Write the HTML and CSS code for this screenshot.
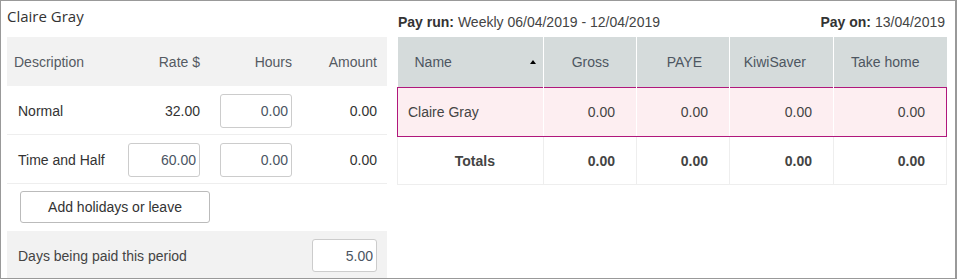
FILE: index.html
```html
<!doctype html>
<html>
	<head>
		<meta charset="utf-8">
		<title>Pay run - Claire Gray</title>
		<link rel="stylesheet" href="styles.css">
	</head>
	<body>
		<div class="frame">
			<div class="left">
				<h2 class="title">Claire Gray</h2>
				<div class="pay-lines">
					<div class="line head">
						<span>Description</span>
						<span class="num">Rate $</span>
						<span class="num">Hours</span>
						<span class="num">Amount</span>
					</div>
					<div class="line">
						<span class="desc">Normal</span>
						<span class="num">32.00</span>
						<input class="box" value="0.00">
						<span class="num">0.00</span>
					</div>
					<div class="line">
						<span class="desc">Time and Half</span>
						<input class="box" value="60.00">
						<input class="box" value="0.00">
						<span class="num">0.00</span>
					</div>
					<div class="actions">
						<button>Add holidays or leave</button>
					</div>
					<div class="days">
						<span>Days being paid this period</span>
						<input class="box" value="5.00">
					</div>
				</div>
			</div>
			<div class="right">
				<div class="run-info">
					<span><b>Pay run:</b> Weekly 06/04/2019 - 12/04/2019</span>
					<span><b>Pay on:</b> 13/04/2019</span>
				</div>
				<table class="summary">
					<colgroup>
						<col style="width: 146px">
						<col style="width: 93px">
						<col style="width: 93px">
						<col style="width: 104px">
						<col style="width: 113px">
					</colgroup>
					<tr>
						<th class="name-col"><span>Name</span><i class="sort"></i></th>
						<th>Gross</th>
						<th>PAYE</th>
						<th>KiwiSaver</th>
						<th>Take home</th>
					</tr>
					<tr class="selected">
						<td class="name">Claire Gray</td>
						<td>0.00</td>
						<td>0.00</td>
						<td>0.00</td>
						<td>0.00</td>
					</tr>
					<tr class="totals">
						<td class="label">Totals</td>
						<td>0.00</td>
						<td>0.00</td>
						<td>0.00</td>
						<td>0.00</td>
					</tr>
				</table>
			</div>
		</div>
	</body>
</html>
```
FILE: styles.css
```css
body {
	margin: 0;
	font-family: "Liberation Sans", Arial, sans-serif;
	font-size: 14px;
	color: #333;
	background: white;
}
.frame {
	box-sizing: border-box;
	width: 957px;
	height: 279px;
	border: 1px solid #999;
	border-right-width: 2px;
	padding: 0 9px 0 6px;
	display: flex;
	gap: 10px;
	overflow: hidden;
}
.left {
	width: 380px;
}
.title {
	height: 36px;
	margin: 0;
	padding-top: 5px;
	box-sizing: border-box;
	font-family: "Open Sans", sans-serif;
	font-weight: normal;
	font-size: 15px;
	color: #333;
}
.line {
	display: grid;
	grid-template-columns: 94px 72px 72px 65px;
	column-gap: 20px;
	align-items: center;
	height: 49px;
	box-sizing: border-box;
	padding: 1px 10px 0 7px;
	border-bottom: 1px solid #eee;
}
.line.head {
	background: #f2f2f2;
	color: #555a62;
	border-bottom: none;
	padding-top: 0;
}
.desc {
	padding-left: 4px;
	white-space: nowrap;
}
.num {
	text-align: right;
}
.box {
	box-sizing: border-box;
	height: 34px;
	width: 100%;
	border: 1px solid #ccc;
	border-radius: 3px;
	padding: 0 3px 0 0;
	text-align: right;
	font-family: inherit;
	font-size: 14px;
	color: #4b5563;
	background: white;
}
.actions {
	height: 47px;
	padding: 7px 0 0 13px;
	box-sizing: border-box;
}
.actions button {
	width: 190px;
	height: 32px;
	border: 1px solid #bbb;
	border-radius: 3px;
	background: white;
	font-family: inherit;
	font-size: 14px;
	color: #333;
}
.days {
	display: flex;
	justify-content: space-between;
	align-items: center;
	height: 47px;
	box-sizing: border-box;
	padding: 2px 10px 0 11px;
	background: #f2f2f2;
	color: #444;
}
.days .box {
	width: 65px;
	height: 33px;
}
.right {
	width: 549px;
}
.run-info {
	height: 36px;
	display: flex;
	justify-content: space-between;
	align-items: flex-end;
	padding: 0 1px 7px 1px;
	box-sizing: border-box;
	color: #444;
}
.run-info b {
	color: #333;
}
.summary {
	width: 549px;
	table-layout: fixed;
	border-collapse: collapse;
}
.summary th {
	height: 50px;
	background: #d5dbdb;
	font-weight: normal;
	color: #4d5661;
	text-align: right;
	padding: 0 27px 0 0;
	border-left: 1px solid white;
}
.summary th:first-child {
	border-left: none;
}
.summary th.name-col {
	text-align: left;
	padding: 0 7px 0 17px;
}
.name-col {
	position: relative;
}
.sort {
	position: absolute;
	right: 7px;
	top: 23px;
	width: 0;
	height: 0;
	border-left: 3.5px solid transparent;
	border-right: 3.5px solid transparent;
	border-bottom: 4px solid black;
}
.summary td {
	height: 48px;
	text-align: right;
	padding: 0 21px 0 0;
	color: #444;
}
.selected td {
	background: #fdeef1;
	border-top: 1px solid #b0177c;
	border-bottom: 1px solid #b0177c;
	border-left: 1px solid #fff;
}
.selected td:first-child {
	border-left: 1px solid #b0177c;
}
.selected td:last-child {
	border-right: 1px solid #b0177c;
}
.selected td.name {
	text-align: left;
	padding-left: 10px;
}
.totals td {
	height: 47px;
	font-weight: bold;
	color: #444;
	border-left: 1px solid #eee;
	border-bottom: 1px solid #eee;
}
.totals td:last-child {
	border-right: 1px solid #eee;
}
.totals td.label {
	padding-right: 48px;
}
```
